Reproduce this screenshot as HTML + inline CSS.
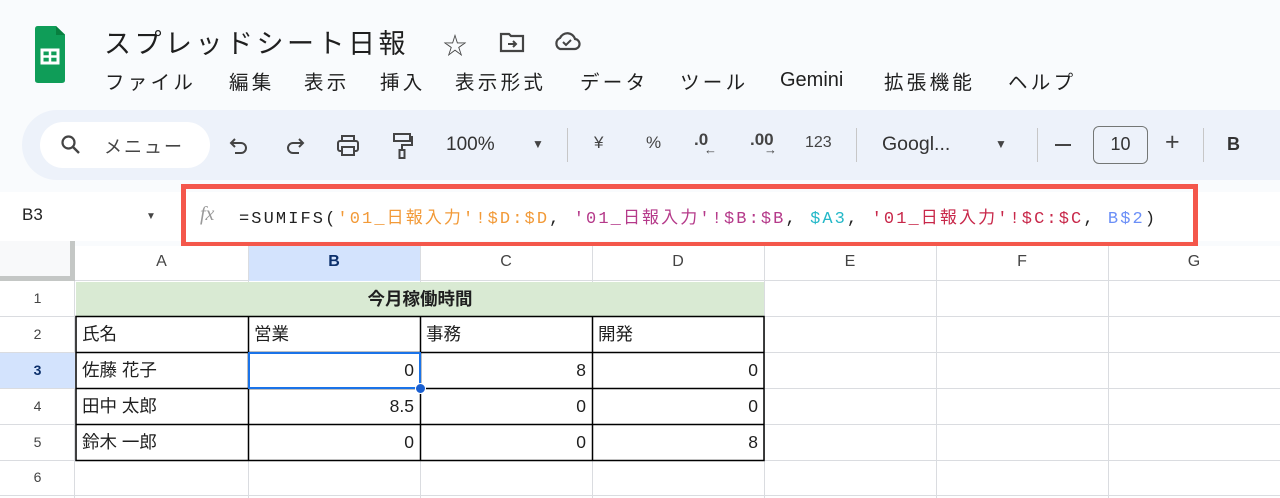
<!DOCTYPE html>
<html><head><meta charset="utf-8"><style>
*{margin:0;padding:0;box-sizing:border-box}
body{width:1280px;height:498px;overflow:hidden;background:#f9fbfd;font-family:"Liberation Sans","Noto Sans CJK JP",sans-serif;color:#1f1f1f;position:relative}
.a{position:absolute;white-space:nowrap}
.t{font-size:16.5px;color:#1f1f1f}
.m{font-size:19.5px;letter-spacing:3.3px;top:66px}
.mono{font-family:"Liberation Mono","Noto Sans CJK JP",monospace;font-size:17px;letter-spacing:2.1px}
.cell{position:absolute;font-size:17.5px;line-height:35px;padding:0 6px}
</style></head><body>
<svg class="a" style="left:35px;top:26px" width="30" height="60" viewBox="0 0 30 60"><path d="M3 0H21L30 9V57Q30 60 27 60H3Q0 60 0 57V3Q0 0 3 0Z" fill="#0f9d58" transform="scale(1,0.95)"/><path d="M21 0V9H30Z" fill="#087f3f"/><rect x="7" y="24" width="16" height="13" fill="none" stroke="#fff" stroke-width="3"/><line x1="7" y1="30.5" x2="23" y2="30.5" stroke="#fff" stroke-width="2.5"/><line x1="15" y1="24" x2="15" y2="37" stroke="#fff" stroke-width="2.5"/></svg>
<div class="a" style="left:104px;top:22px;font-size:27px;letter-spacing:3.5px;color:#1f1f1f">スプレッドシート日報</div>
<div class="a" style="left:443px;top:26px;font-size:24px;color:#444">☆</div>
<svg class="a" style="left:499px;top:31px" width="26" height="22" viewBox="0 0 26 22"><path d="M2 3h8l2 2h12v15H2z" fill="none" stroke="#444" stroke-width="2.2"/><path d="M9 13h8M14 10l3 3-3 3" fill="none" stroke="#444" stroke-width="2"/></svg>
<svg class="a" style="left:553px;top:30px" width="28" height="22" viewBox="0 0 28 22"><path d="M7 19h14a5 5 0 0 0 1-10 8 8 0 0 0-15-1 6 6 0 0 0 0 11z" fill="none" stroke="#444" stroke-width="2.2"/><path d="M10 12l3 3 5-5" fill="none" stroke="#444" stroke-width="2"/></svg>
<div class="a t m" style="left:105px">ファイル</div>
<div class="a t m" style="left:229px">編集</div>
<div class="a t m" style="left:304px">表示</div>
<div class="a t m" style="left:380px">挿入</div>
<div class="a t m" style="left:455px">表示形式</div>
<div class="a t m" style="left:580px">データ</div>
<div class="a t m" style="left:680px">ツール</div>
<div class="a t" style="left:780px;top:69px;font-size:20px">Gemini</div>
<div class="a t m" style="left:884px">拡張機能</div>
<div class="a t m" style="left:1008px">ヘルプ</div>
<div class="a" style="left:22px;top:110px;width:1280px;height:70px;background:#edf2fa;border-radius:35px 0 0 35px"></div>
<div class="a" style="left:40px;top:122px;width:170px;height:46px;background:#fff;border-radius:23px"></div>
<svg class="a" style="left:60px;top:134px" width="22" height="22" viewBox="0 0 22 22"><circle cx="8.5" cy="8.5" r="6" fill="none" stroke="#444" stroke-width="2.2"/><path d="M13 13l6 6" stroke="#444" stroke-width="2.4"/></svg>
<div class="a t" style="left:104px;top:133px;font-size:18px;letter-spacing:2px;color:#444">メニュー</div>
<svg class="a" style="left:229px;top:136px" width="22" height="22" viewBox="0 0 22 22"><path d="M6 3L2 7l4 4" fill="none" stroke="#444" stroke-width="2"/><path d="M2 7h10a5 5 0 0 1 0 10H6" fill="none" stroke="#444" stroke-width="2"/></svg>
<svg class="a" style="left:283px;top:136px" width="22" height="22" viewBox="0 0 22 22"><path d="M16 3l4 4-4 4" fill="none" stroke="#444" stroke-width="2"/><path d="M20 7H10a5 5 0 0 0 0 10h6" fill="none" stroke="#444" stroke-width="2"/></svg>
<svg class="a" style="left:336px;top:135px" width="24" height="22" viewBox="0 0 24 22"><rect x="6" y="1" width="12" height="5" fill="none" stroke="#444" stroke-width="2"/><rect x="2" y="6" width="20" height="10" rx="2" fill="none" stroke="#444" stroke-width="2"/><rect x="6" y="12" width="12" height="8" fill="#edf2fa" stroke="#444" stroke-width="2"/></svg>
<svg class="a" style="left:392px;top:132px" width="22" height="28" viewBox="0 0 22 28"><rect x="2" y="2" width="16" height="7" fill="none" stroke="#444" stroke-width="2"/><path d="M18 5h2v8H10v5" fill="none" stroke="#444" stroke-width="2"/><rect x="7.5" y="18" width="5" height="8" fill="none" stroke="#444" stroke-width="2"/></svg>
<div class="a t" style="left:446px;top:134px;font-size:19px;color:#333">100%</div>
<div class="a" style="left:532px;top:137px;font-size:12px;color:#444">▼</div>
<div class="a" style="left:567px;top:128px;width:1px;height:34px;background:#c7c7c7"></div>
<div class="a t" style="left:594px;top:133px;font-size:17px;color:#444">¥</div>
<div class="a t" style="left:646px;top:133px;font-size:17px;color:#444">%</div>
<div class="a t" style="left:694px;top:130px;font-size:17px;color:#444;font-weight:bold">.0</div>
<div class="a" style="left:704px;top:142px;font-size:13px;color:#444">←</div>
<div class="a t" style="left:750px;top:130px;font-size:17px;color:#444;font-weight:bold">.00</div>
<div class="a" style="left:764px;top:142px;font-size:13px;color:#444">→</div>
<div class="a t" style="left:805px;top:134px;font-size:16px;color:#444">123</div>
<div class="a" style="left:856px;top:128px;width:1px;height:34px;background:#c7c7c7"></div>
<div class="a t" style="left:882px;top:133px;font-size:19.5px;color:#333">Googl...</div>
<div class="a" style="left:995px;top:137px;font-size:12px;color:#444">▼</div>
<div class="a" style="left:1037px;top:128px;width:1px;height:34px;background:#c7c7c7"></div>
<div class="a" style="left:1055px;top:144px;width:16px;height:2px;background:#444"></div>
<div class="a" style="left:1093px;top:126px;width:55px;height:38px;border:1.5px solid #747775;border-radius:6px;text-align:center;line-height:35px;font-size:18px;color:#333">10</div>
<div class="a" style="left:1165px;top:128px;font-size:25px;color:#444">+</div>
<div class="a" style="left:1203px;top:128px;width:1px;height:34px;background:#c7c7c7"></div>
<div class="a" style="left:1227px;top:134px;font-size:18px;font-weight:bold;color:#333">B</div>
<div class="a" style="left:0;top:192px;width:1280px;height:49px;background:#fff"></div>
<div class="a" style="left:22px;top:205px;font-size:17px;color:#222">B3</div>
<div class="a" style="left:146px;top:211px;font-size:10px;color:#444">▼</div>
<div class="a" style="left:181px;top:184px;width:1017px;height:63px;border:5px solid #f4574b"></div>
<div class="a" style="left:200px;top:203px;font-size:20px;font-style:italic;font-family:'Liberation Serif',serif;color:#999">fx</div>
<div class="a mono" style="left:239px;top:203px;color:#222">=SUMIFS(<span style="color:#f29a38">'01_日報入力'!$D:$D</span>, <span style="color:#b53a8a">'01_日報入力'!$B:$B</span>, <span style="color:#24b8c8">$A3</span>, <span style="color:#c8284a">'01_日報入力'!$C:$C</span>, <span style="color:#6b8ff7">B$2</span>)</div>
<div class="a" style="left:0;top:247px;width:1280px;height:251px;background:#fff"></div>
<div class="a" style="left:0;top:241px;width:75px;height:40px;background:#f8f9fa;border-right:5px solid #c4c7c5;border-bottom:5px solid #c4c7c5"></div>
<div class="a" style="left:75px;top:246px;width:1205px;height:35px;background:#fff;border-bottom:1px solid #dadce0"></div>
<div class="a" style="left:248px;top:246px;width:172px;height:35px;background:#d3e3fd"></div>
<div class="a" style="left:0;top:281px;width:75px;height:217px;background:#fff;border-right:1px solid #dadce0"></div>
<div class="a" style="left:0;top:352px;width:75px;height:36px;background:#d3e3fd"></div>
<svg class="a" style="left:0;top:246px" width="1280" height="252">
<g stroke="#dadce0" stroke-width="1">
<line x1="248.5" y1="0" x2="248.5" y2="252"/><line x1="420.5" y1="0" x2="420.5" y2="252"/><line x1="592.5" y1="0" x2="592.5" y2="252"/><line x1="764.5" y1="0" x2="764.5" y2="252"/><line x1="936.5" y1="0" x2="936.5" y2="252"/><line x1="1108.5" y1="0" x2="1108.5" y2="252"/>
<line x1="0" y1="70.5" x2="1280" y2="70.5"/><line x1="0" y1="106.5" x2="1280" y2="106.5"/><line x1="0" y1="142.5" x2="1280" y2="142.5"/><line x1="0" y1="178.5" x2="1280" y2="178.5"/><line x1="0" y1="214.5" x2="1280" y2="214.5"/><line x1="0" y1="249.5" x2="1280" y2="249.5"/>
</g>
<rect x="76" y="36" width="688" height="34" fill="#d9ead3"/>
<g stroke="#000" stroke-width="1.5" fill="none">
<rect x="76" y="70.5" width="688" height="144"/>
<line x1="76" y1="106.5" x2="764" y2="106.5"/><line x1="76" y1="142.5" x2="764" y2="142.5"/><line x1="76" y1="178.5" x2="764" y2="178.5"/>
<line x1="248.5" y1="70" x2="248.5" y2="214"/><line x1="420.5" y1="70" x2="420.5" y2="214"/><line x1="592.5" y1="70" x2="592.5" y2="214"/>
</g>
<rect x="249" y="107" width="171" height="35" fill="none" stroke="#1a73e8" stroke-width="2"/>
<circle cx="420.5" cy="142.5" r="5" fill="#1a5fd0" stroke="#fff" stroke-width="1"/>
</svg>
<div class="a" style="left:75px;top:253px;width:173px;text-align:center;font-size:16px;color:#444">A</div>
<div class="a" style="left:248px;top:253px;width:172px;text-align:center;font-size:16px;color:#0b2f6b;font-weight:bold">B</div>
<div class="a" style="left:420px;top:253px;width:172px;text-align:center;font-size:16px;color:#444">C</div>
<div class="a" style="left:592px;top:253px;width:172px;text-align:center;font-size:16px;color:#444">D</div>
<div class="a" style="left:764px;top:253px;width:172px;text-align:center;font-size:16px;color:#444">E</div>
<div class="a" style="left:936px;top:253px;width:172px;text-align:center;font-size:16px;color:#444">F</div>
<div class="a" style="left:1108px;top:253px;width:172px;text-align:center;font-size:16px;color:#444">G</div>
<div class="a" style="left:0;top:290px;width:75px;text-align:center;font-size:14px;color:#444">1</div>
<div class="a" style="left:0;top:326px;width:75px;text-align:center;font-size:14px;color:#444">2</div>
<div class="a" style="left:0;top:362px;width:75px;text-align:center;font-size:14px;color:#0b2f6b;font-weight:bold">3</div>
<div class="a" style="left:0;top:398px;width:75px;text-align:center;font-size:14px;color:#444">4</div>
<div class="a" style="left:0;top:434px;width:75px;text-align:center;font-size:14px;color:#444">5</div>
<div class="a" style="left:0;top:469px;width:75px;text-align:center;font-size:14px;color:#444">6</div>
<div class="cell" style="left:76px;top:282px;width:688px;text-align:center;font-weight:bold">今月稼働時間</div>
<div class="cell" style="left:76px;top:317px">氏名</div>
<div class="cell" style="left:248px;top:317px">営業</div>
<div class="cell" style="left:420px;top:317px">事務</div>
<div class="cell" style="left:592px;top:317px">開発</div>
<div class="cell" style="left:76px;top:353px">佐藤 花子</div>
<div class="cell" style="left:76px;top:389px">田中 太郎</div>
<div class="cell" style="left:76px;top:425px">鈴木 一郎</div>
<div class="cell" style="left:248px;top:353px;width:172px;text-align:right">0</div>
<div class="cell" style="left:420px;top:353px;width:172px;text-align:right">8</div>
<div class="cell" style="left:592px;top:353px;width:172px;text-align:right">0</div>
<div class="cell" style="left:248px;top:389px;width:172px;text-align:right">8.5</div>
<div class="cell" style="left:420px;top:389px;width:172px;text-align:right">0</div>
<div class="cell" style="left:592px;top:389px;width:172px;text-align:right">0</div>
<div class="cell" style="left:248px;top:425px;width:172px;text-align:right">0</div>
<div class="cell" style="left:420px;top:425px;width:172px;text-align:right">0</div>
<div class="cell" style="left:592px;top:425px;width:172px;text-align:right">8</div>
</body></html>
